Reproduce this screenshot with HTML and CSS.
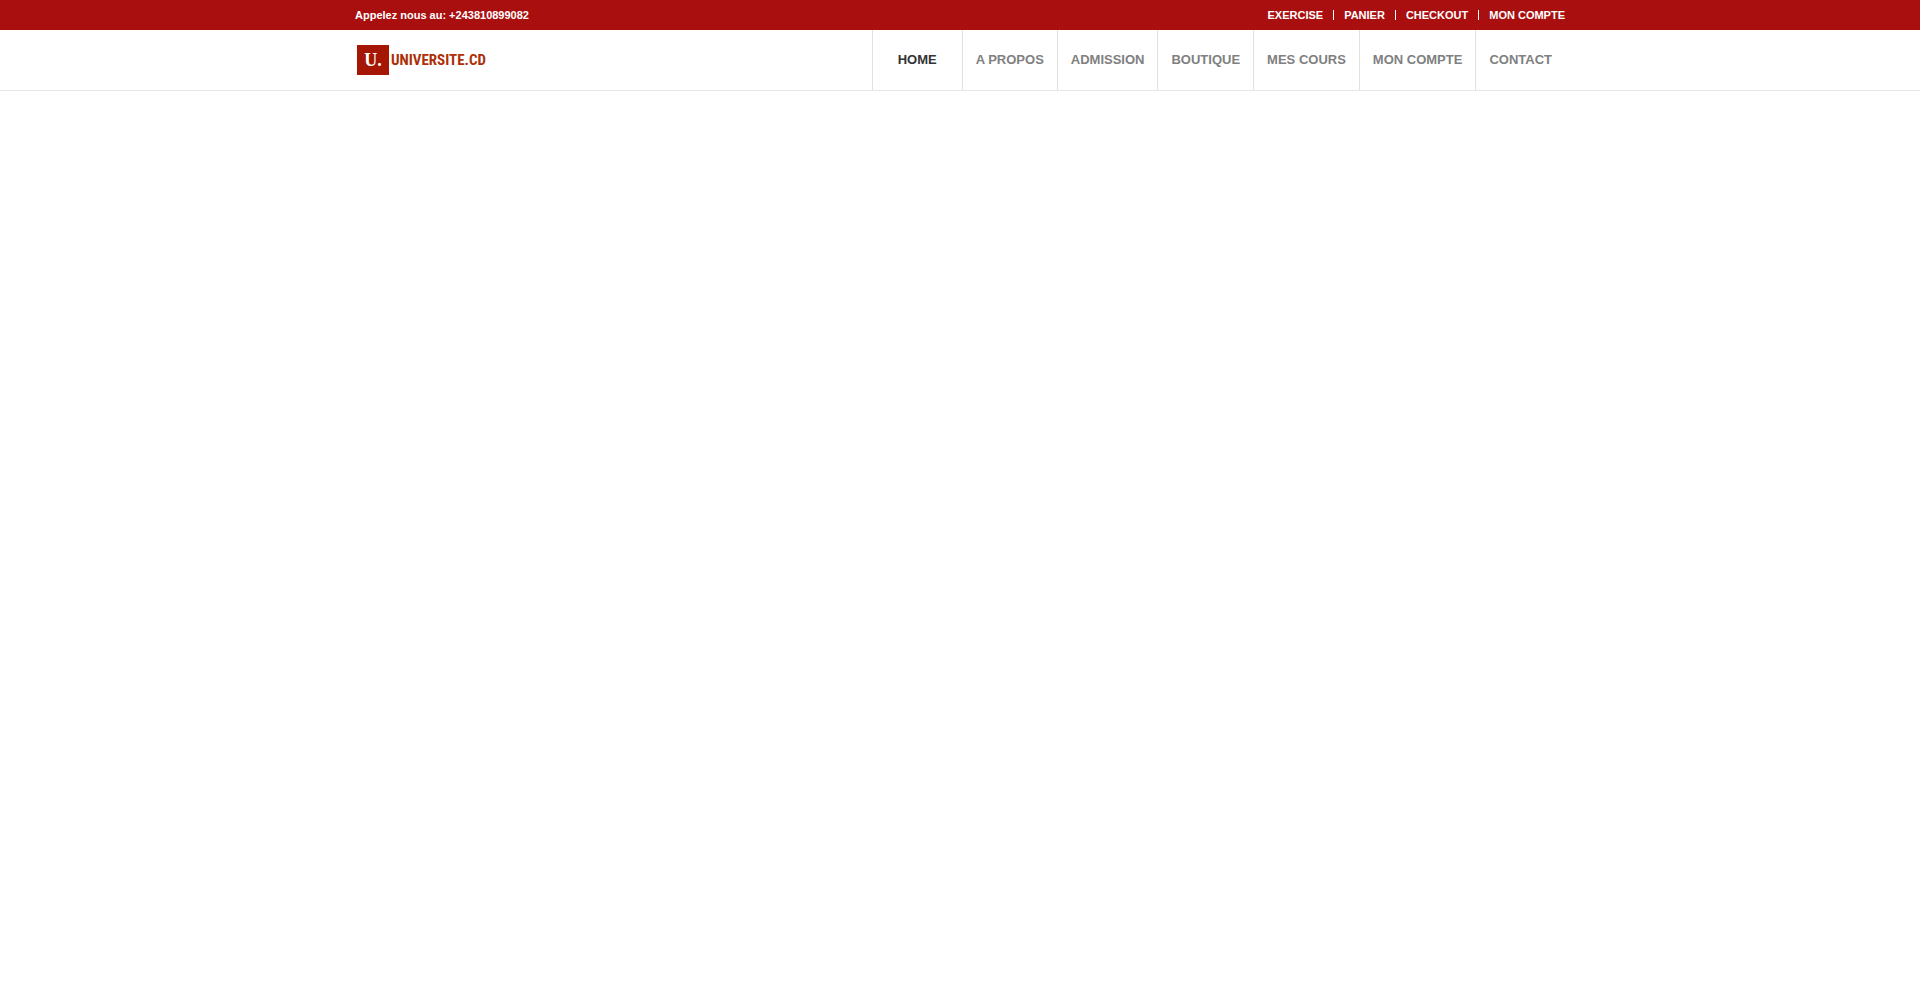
FILE: index.html
```
<!DOCTYPE html>
<html lang="fr">
<head>
    <meta charset="UTF-8">
    <meta name="viewport" content="width=device-width, initial-scale=1.0">
    <title>Universite.cd</title>
    <link rel="stylesheet" href="styles.css">
</head>
<body>
    <div class="topbar">
        <div class="container">
            <p class="phone">Appelez nous au: +243810899082</p>
            <nav class="top-menu" aria-label="Menu secondaire">
                <a href="#">EXERCISE</a>
                <a href="#">PANIER</a>
                <a href="#">CHECKOUT</a>
                <a href="#">MON COMPTE</a>
            </nav>
        </div>
    </div>
    <header class="header">
        <div class="container">
            <a href="#" class="logo">
                <span class="logo-mark">U.</span>
                <span class="logo-text">UNIVERSITE.CD</span>
            </a>
            <nav class="main-menu" aria-label="Menu principal">
                <a href="#" class="active">HOME</a>
                <a href="#">A PROPOS</a>
                <a href="#">ADMISSION</a>
                <a href="#">BOUTIQUE</a>
                <a href="#">MES COURS</a>
                <a href="#">MON COMPTE</a>
                <a href="#">CONTACT</a>
            </nav>
        </div>
    </header>
    <main></main>
</body>
</html>
```
FILE: styles.css
```
body {
    margin: 0;
    font-family: "Liberation Sans", Arial, sans-serif;
    background-color: #fff;
    color: #808080;
}

a {
    color: inherit;
    text-decoration: none;
}

.container {
    display: flex;
    justify-content: space-between;
    max-width: 1210px;
    margin: 0 auto;
}

.topbar {
    background-color: #aa0f0f;
    color: #fff;
    font-size: 11px;
    font-weight: bold;
    line-height: 30px;
}

.phone {
    margin: 0;
}

.top-menu {
    display: flex;
    align-items: center;
}

.top-menu a {
    line-height: 10px;
    padding-left: 10px;
    margin-left: 10px;
    border-left: 1px solid #fff;
}

.top-menu a:first-child {
    border-left: 0;
}

.header {
    border-bottom: 1px solid #e6e6e6;
}

.logo {
    display: flex;
    align-items: center;
    gap: 2px;
    padding-left: 2px;
}

.logo-mark {
    width: 32px;
    background-color: #a51605;
    color: #fff;
    font-family: "Liberation Serif", "Times New Roman", serif;
    font-size: 18px;
    font-weight: bold;
    line-height: 30px;
    text-align: center;
}

.logo-text {
    color: #ab3008;
    font-family: "Roboto Condensed", "Liberation Sans", sans-serif;
    font-size: 15px;
    font-weight: bold;
}

.main-menu {
    display: flex;
    font-size: 13px;
    font-weight: bold;
    line-height: 60px;
}

.main-menu a {
    padding: 0 13px;
    border-left: 1px solid #e1e1e1;
}

.main-menu a:hover,
.main-menu .active {
    color: #333;
}

.main-menu .active {
    padding: 0 25px;
}
```
